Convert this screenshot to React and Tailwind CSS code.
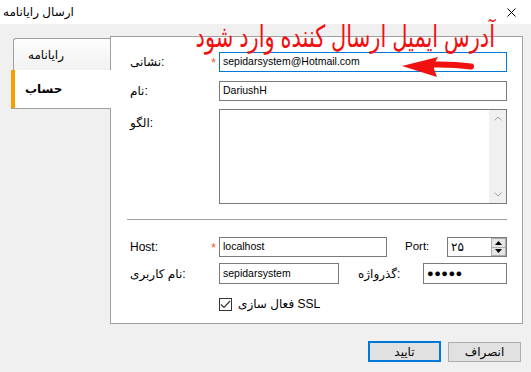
import React from "react";

const font = { fontFamily: '"Liberation Sans", "DejaVu Sans", sans-serif' };

const Label = ({ children, star }) => (
  <div className="w-[89px] shrink-0 flex items-center justify-between pr-[3px]">
    <span dir="ltr">{children}</span>
    {star && <span className="text-[#e8542a] text-[12px] leading-none mt-[2px]">*</span>}
  </div>
);

const Input = ({ value, className = "", focused }) => (
  <div
    className={`h-[20px] bg-white flex items-center pl-[3px] text-[10.5px] border ${
      focused ? "border-[#0078d7]" : "border-[#7a7a7a]"
    } ${className}`}
  >
    {value}
  </div>
);

export default function App() {
  return (
    <div
      className="relative w-[531px] h-[372px] bg-[#f0f0f0] text-[12px] text-black overflow-hidden"
      style={font}
    >
      {/* title bar */}
      <div className="h-[24px] bg-white flex items-center justify-between pl-[3px] pr-[15px]">
        <span>ارسال رایانامه</span>
        <svg width="9" height="9" viewBox="0 0 9 9">
          <path d="M0.5 0.5 L8.5 8.5 M8.5 0.5 L0.5 8.5" stroke="#000" strokeWidth="1" />
        </svg>
      </div>

      <div className="flex items-start pl-[11px] pt-[12px]">
        {/* tabs */}
        <div className="w-[100px] mt-[2px] flex flex-col relative z-10 -mr-px">
          <div className="ml-[2px] h-[33px] border border-r-0 border-[#a0a0a0] rounded-tl-[3px] bg-gradient-to-b from-[#fdfdfd] to-[#f2f2f2] flex items-center pl-[14px] mr-px">
            <span>رایانامه</span>
          </div>
          <div className="h-[39px] bg-white border-b border-[#a0a0a0] flex items-center -mt-px">
            <div className="w-[4px] self-stretch bg-[#f7a100]" />
            <span className="font-bold pl-[10px]">حساب</span>
          </div>
        </div>

        {/* panel */}
        <div className="w-[413px] h-[288px] bg-white border border-[#a0a0a0] pl-[19px] pr-[15px] pt-[15px] flex flex-col">
          <div className="flex items-center h-[20px]">
            <Label star>نشانی:</Label>
            <Input value="sepidarsystem@Hotmail.com" className="flex-1" focused />
          </div>
          <div className="flex items-center h-[20px] mt-[9px]">
            <Label>نام:</Label>
            <Input value="DariushH" className="flex-1" />
          </div>
          <div className="flex items-start mt-[8px]">
            <div className="w-[89px] pt-[5px]" dir="ltr">الگو:</div>
            <div className="flex-1 h-[95px] border border-[#7a7a7a] flex justify-end">
              <div className="w-[17px] bg-[#f0f0f0] flex flex-col items-center justify-between py-[6px]">
                <svg width="8" height="5" viewBox="0 0 8 5">
                  <path d="M0.5 4.5 L4 1 L7.5 4.5" fill="none" stroke="#a3a3a3" />
                </svg>
                <svg width="8" height="5" viewBox="0 0 8 5">
                  <path d="M0.5 0.5 L4 4 L7.5 0.5" fill="none" stroke="#a3a3a3" />
                </svg>
              </div>
            </div>
          </div>

          <div className="h-px bg-[#a0a0a0] mt-[15px] -ml-[3px]" />

          <div className="flex items-center h-[20px] mt-[17px]">
            <Label star><span className="text-[12px]">Host:</span></Label>
            <Input value="localhost" className="w-[168px]" />
            <div className="w-[60px] pl-[18px] text-[11.5px]">Port:</div>
            <div className="w-[60px] h-[20px] border border-[#7a7a7a] flex items-center justify-between pl-[3px]">
              <span>۲۵</span>
              <div className="w-[15px] h-[18px] flex flex-col">
                <div className="flex-1 bg-[#e5e5e5] border border-[#adadad] flex items-center justify-center">
                  <svg width="7" height="4" viewBox="0 0 7 4"><path d="M0 4 L3.5 0 L7 4 Z" fill="#000" /></svg>
                </div>
                <div className="flex-1 bg-[#e5e5e5] border border-t-0 border-[#adadad] flex items-center justify-center">
                  <svg width="7" height="4" viewBox="0 0 7 4"><path d="M0 0 L3.5 4 L7 0 Z" fill="#000" /></svg>
                </div>
              </div>
            </div>
          </div>

          <div className="flex items-center h-[21px] mt-[6px]">
            <Label>نام کاربری:</Label>
            <Input value="sepidarsystem" className="w-[120px] h-[21px]" />
            <div className="w-[84px] pl-[19px]" dir="ltr">گذرواژه:</div>
            <Input value={<span className="text-[11px] tracking-[0.5px]">●●●●●</span>} className="w-[84px] h-[21px]" />
          </div>

          <div className="flex items-center mt-[11px] pl-[89px]">
            <div className="w-[13px] h-[13px] border border-[#333] bg-white flex items-center justify-center">
              <svg width="11" height="9" viewBox="0 0 11 9">
                <path d="M1 4.5 L4 7.5 L10 1" fill="none" stroke="#333" strokeWidth="1.2" />
              </svg>
            </div>
            <span className="ml-[6px]" dir="ltr">فعال سازی SSL</span>
          </div>
        </div>
      </div>

      {/* buttons */}
      <div className="flex justify-end gap-[7px] pr-[10px] mt-[17px]">
        <div className="w-[73px] h-[21px] border-2 border-[#0078d7] bg-[#e1e1e1] flex items-center justify-center">
          تایید
        </div>
        <div className="w-[73px] h-[20px] mt-px border border-[#adadad] bg-[#e1e1e1] flex items-center justify-center">
          انصراف
        </div>
      </div>

      {/* annotation */}
      <div
        className="absolute top-[21px] right-[36px] text-[#f01010] text-[21px] leading-none whitespace-nowrap origin-top scale-y-[1.45]"
        style={font}
      >
        آدرس ایمیل ارسال کننده وارد شود
      </div>
      <svg className="absolute left-[398px] top-[54px]" width="80" height="26" viewBox="0 0 80 26">
        <path d="M4 12 L40 3 L36 10 L36 15 L39 23 Z" fill="#f21111" />
        <path d="M34 10.5 Q55 10 73 12.5" fill="none" stroke="#f21111" strokeWidth="6" strokeLinecap="round" />
      </svg>
    </div>
  );
}
